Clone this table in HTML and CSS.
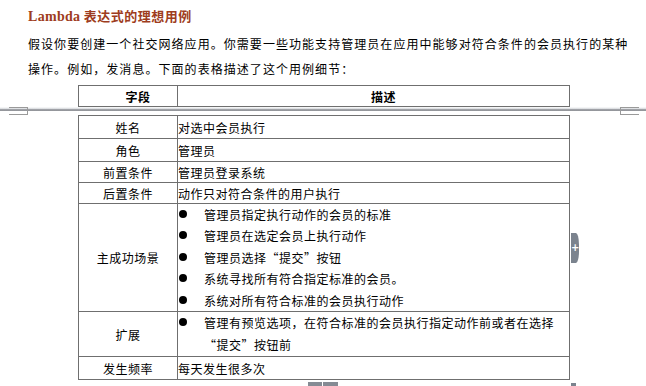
FILE: index.html
```html
<html lang="zh">
<head>
    <meta charset="UTF-8">
    <meta name="viewport" content="width=device-width, initial-scale=1.0">
    <title>Lambda 表达式的理想用例</title>
    <link rel="stylesheet" href="styles.css">
</head>
<body>
    <div class="doc">
        <h3 class="title"><span class="latin">Lambda</span> 表达式的理想用例</h3>
        <p class="intro">假设你要创建一个社交网络应用。你需要一些功能支持管理员在应用中能够对符合条件的会员执行的某种<br>操作。例如，发消息。下面的表格描述了这个用例细节：</p>
        <table class="spec head">
            <tr>
                <th class="field">字段</th>
                <th>描述</th>
            </tr>
        </table>
    </div>

    <div class="page-gap">
        <span class="mark left"></span>
        <span class="mark right"></span>
    </div>

    <div class="doc">
        <table class="spec body">
            <tr class="r1">
                <td class="field">姓名</td>
                <td>对选中会员执行</td>
            </tr>
            <tr class="r1">
                <td class="field">角色</td>
                <td>管理员</td>
            </tr>
            <tr class="r2">
                <td class="field">前置条件</td>
                <td>管理员登录系统</td>
            </tr>
            <tr class="r2">
                <td class="field">后置条件</td>
                <td>动作只对符合条件的用户执行</td>
            </tr>
            <tr>
                <td class="field">主成功场景</td>
                <td>
                    <ul class="steps">
                        <li>管理员指定执行动作的会员的标准</li>
                        <li>管理员在选定会员上执行动作</li>
                        <li>管理员选择“提交”按钮</li>
                        <li>系统寻找所有符合指定标准的会员。</li>
                        <li>系统对所有符合标准的会员执行动作</li>
                    </ul>
                </td>
            </tr>
            <tr>
                <td class="field">扩展</td>
                <td>
                    <ul class="steps wide">
                        <li>管理有预览选项，在符合标准的会员执行指定动作前或者在选择<br>“提交”按钮前</li>
                    </ul>
                </td>
            </tr>
            <tr class="r1">
                <td class="field">发生频率</td>
                <td>每天发生很多次</td>
            </tr>
        </table>
    </div>

    <div class="side-tab">+</div>

    <div class="scroll-foot">
        <span class="thumb"></span>
        <span class="corner"></span>
    </div>
</body>
</html>
```

FILE: styles.css
```css
body {
    margin: 0;
    background: #ffffff;
    color: #000000;
    font-family: "Noto Sans CJK SC", "Liberation Serif", serif;
    overflow: hidden;
}

.doc {
    padding-left: 28px;
}

.title {
    margin: 0;
    padding-top: 7px;
    font-size: 13px;
    line-height: 17px;
    font-weight: bold;
    color: #9e3c20;
    letter-spacing: 0.5px;
}

.title .latin {
    font-family: "Liberation Serif", serif;
    font-size: 14px;
    letter-spacing: 0.3px;
}

.intro {
    margin: 6px 0 0;
    font-size: 12px;
    line-height: 25px;
    letter-spacing: 1.05px;
    white-space: nowrap;
}

/* both halves of the table share these */
.spec {
    margin-left: 50px;
    width: 492px;
    table-layout: fixed;
    border-collapse: collapse;
    font-size: 12px;
    letter-spacing: 0.5px;
}

.spec th,
.spec td {
    border: 1px solid #6f6f6f;
    padding: 0;
    text-align: left;
    vertical-align: middle;
}

.spec .field {
    width: 98px;
    text-align: center;
}

.head {
    margin-top: 4px;
}

.head th {
    height: 21px;
    font-weight: bold;
    text-align: center;
    padding-left: 20px;
}

.head th.field {
    width: 78px;
}

.body tr.r1 td { height: 23px; }
.body tr.r2 td { height: 21px; }

.steps {
    list-style: none;
    margin: 0;
    padding: 0;
    line-height: 21.4px;
}

.steps.wide {
    line-height: 22px;
}

.steps li {
    position: relative;
    padding-left: 26px;
}

.steps li::before {
    content: "";
    position: absolute;
    left: 1px;
    top: 6px;
    width: 8px;
    height: 8px;
    border-radius: 50%;
    background: #000000;
}

/* page break between the header row and the rest */
.page-gap {
    position: relative;
    height: 8px;
    display: flex;
    justify-content: space-between;
    padding: 0 7px 0 9px;
    background: linear-gradient(to bottom, #ffffff 0, #d4d6da 2px, #a6a8ad 2px, #8f9196 4px, #ffffff 4px);
}

.mark {
    width: 19px;
    height: 8px;
    border-top: 1px solid #9a9a9a;
    border-bottom: 1px solid #9a9a9a;
    box-sizing: border-box;
}

.mark.left { border-right: 1px solid #9a9a9a; }
.mark.right { border-left: 1px solid #9a9a9a; }

.side-tab {
    position: absolute;
    left: 571px;
    top: 233px;
    width: 8px;
    height: 30px;
    background: #7b838e;
    border-radius: 0 3px 3px 0 / 0 12px 12px 0;
    color: #ffffff;
    font-family: "DejaVu Sans", sans-serif;
    font-size: 10px;
    font-weight: bold;
    line-height: 30px;
    text-align: center;
    overflow: hidden;
}

.scroll-foot {
    position: relative;
    height: 4px;
    margin-top: 1px;
}

.thumb {
    position: absolute;
    left: 308px;
    top: 1px;
    width: 30px;
    height: 4px;
    background: linear-gradient(to right, #858b94 14px, #ffffff 14px, #ffffff 15px, #858b94 15px);
}

.corner {
    position: absolute;
    left: 571px;
    top: 2px;
    width: 5px;
    height: 3px;
    background: #7b838e;
}
```
